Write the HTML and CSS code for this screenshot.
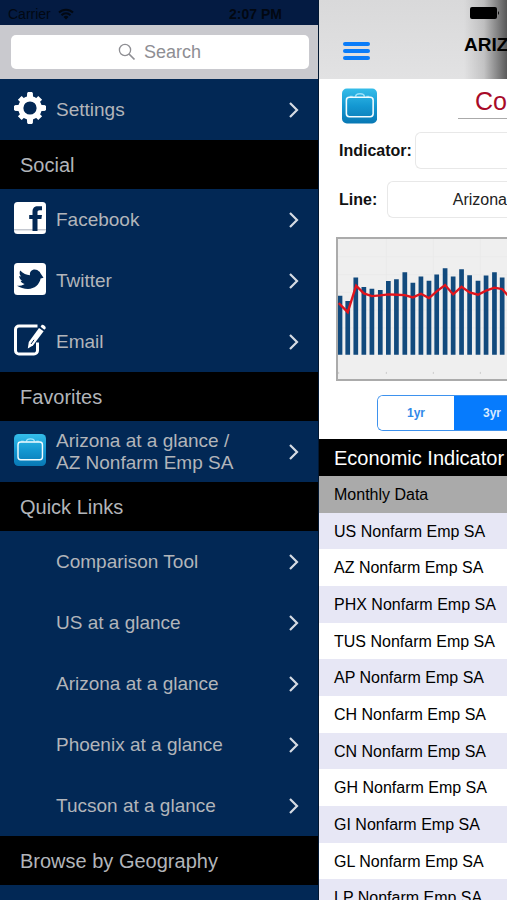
FILE: index.html
```html
<!DOCTYPE html>
<html lang="en">
<head>
<meta charset="utf-8">
<meta name="viewport" content="width=device-width, initial-scale=1">
<title>Arizona Economic Indicators</title>
<link rel="stylesheet" href="styles.css">
</head>
<body>
<svg class="defs" aria-hidden="true">
  <defs>
    <linearGradient id="tile" x1="0" y1="0" x2="0" y2="1">
      <stop offset="0" stop-color="#35bde9"/>
      <stop offset="0.5" stop-color="#1498d2"/>
      <stop offset="1" stop-color="#0878b4"/>
    </linearGradient>
    <symbol id="chevron" viewBox="0 0 12 18"><path d="M2 2l7 7-7 7" fill="none" stroke="#d5dbe3" stroke-width="2.200"/></symbol>
    <symbol id="case" viewBox="0 0 36 36">
      <rect width="36" height="36" rx="5" fill="url(#tile)"/>
      <path d="M14 8.500C14 4.500 23 4.500 23 8.500" fill="none" stroke="#9be2fa" stroke-width="1.500"/>
      <path d="M8 8h3M25 8h3" stroke="#9be2fa"/>
      <rect x="4.500" y="9" width="27.500" height="20" rx="3" fill="none" stroke="#f2fcff" stroke-width="1.600"/>
    </symbol>
  </defs>
</svg>
<div class="app">
  <aside class="menu">
    <div class="status">
      <span>Carrier</span>
      <svg class="wifi" viewBox="0 0 16 12"><path d="M1 4.500a10 10 0 0 1 14 0M3.500 7.200a6.400 6.400 0 0 1 9 0" fill="none" stroke="#020812" stroke-width="2"/><path d="M5.500 9a3.600 3.600 0 0 1 5 0L8 11.600z" fill="#020812"/></svg>
      <time>2:07 PM</time>
    </div>
    <div class="search">
      <label class="search-box">
        <svg viewBox="0 0 18 18"><circle cx="7" cy="7" r="5.600" fill="none" stroke="#8e8e93" stroke-width="1.300"/><path d="M11 11l5.500 5.500" stroke="#8e8e93" stroke-width="1.700"/></svg>
        <input type="text" placeholder="Search" aria-label="Search">
      </label>
    </div>
    <nav>
      <a class="item" href="#settings">
        <svg class="icon" viewBox="0 0 32 32">
          <path d="M16 1v30M1 16h30M5.800 5.800l20.400 20.400M26.200 5.800L5.800 26.200" stroke="#fff" stroke-width="5.400" stroke-linecap="butt"/>
          <circle cx="16" cy="16" r="11.800" fill="#fff"/>
          <path d="M13.700 0h4.600l.9 5h-6.400zM13.700 32h4.600l.9-5h-6.400zM0 13.700v4.600l5 .9v-6.400zM32 13.700v4.600l-5 .9v-6.400z" fill="#fff"/>
          <circle cx="16" cy="16" r="6.600" fill="#022855"/>
        </svg>
        <span>Settings</span><svg class="chev"><use href="#chevron"/></svg>
      </a>
      <h2>Social</h2>
      <a class="item" href="#facebook">
        <svg class="icon" viewBox="0 0 32 32"><rect width="32" height="32" rx="3.500" fill="#fff"/><path d="M0 27h32v1.500H0z" fill="#c4c8d0"/><path fill="#022855" d="M18.500 29V17h-3.300v-4h3.300V9.800c0-3.700 2-5.500 5.300-5.500H28v4h-2.400c-1.600 0-2.100.7-2.100 2V13H28l-.6 4h-3.900v12z"/></svg>
        <span>Facebook</span><svg class="chev"><use href="#chevron"/></svg>
      </a>
      <a class="item" href="#twitter">
        <svg class="icon" viewBox="0 0 32 32"><rect width="32" height="32" rx="3.500" fill="#fff"/><path fill="#022855" d="M6.200 7.500c3 3.300 6.200 4.500 9.800 4.700-.6-3.400 1.800-5.700 4.700-5.700 2 0 3.200.8 4 1.800 0 0 1.100.2 1.600 1.600l3.200 4.800-2.900.9C25.500 21.500 20.600 26 14 26c-4 0-8-1.200-11-3.200 3 .1 6-.6 7.700-1.900-2.100-.3-3.500-1.400-4.100-3.100h1.800c-2-1-3.100-2.500-3.200-4.800l2 .5C5.500 11.900 5.200 9.500 6.200 7.500z"/></svg>
        <span>Twitter</span><svg class="chev"><use href="#chevron"/></svg>
      </a>
      <a class="item" href="#email">
        <svg class="icon" viewBox="0 0 32 32"><path d="M23.500 2H5a3.500 3.500 0 0 0-3.500 3.500v21A3.500 3.500 0 0 0 5 30h15a3.500 3.500 0 0 0 3.500-3.500V18.500" fill="none" stroke="#fff" stroke-width="3"/><path d="M13.800 24.500l1-6.500L25 4l4.600 3.300L19 21.500z" fill="#fff"/><path d="M26.600 2.800l1-1.700c1-1.400 5 1.700 4 3.100l-1.200 1.600z" fill="#fff"/><path d="M17 20l3-4.200" stroke="#022855"/></svg>
        <span>Email</span><svg class="chev"><use href="#chevron"/></svg>
      </a>
      <h2>Favorites</h2>
      <a class="item" href="#favorite">
        <svg class="icon"><use href="#case"/></svg>
        <span>Arizona at a glance /<br>AZ Nonfarm Emp SA</span><svg class="chev"><use href="#chevron"/></svg>
      </a>
      <h2>Quick Links</h2>
      <a class="item plain" href="#compare"><span>Comparison Tool</span><svg class="chev"><use href="#chevron"/></svg></a>
      <a class="item plain" href="#us"><span>US at a glance</span><svg class="chev"><use href="#chevron"/></svg></a>
      <a class="item plain" href="#arizona"><span>Arizona at a glance</span><svg class="chev"><use href="#chevron"/></svg></a>
      <a class="item plain" href="#phoenix"><span>Phoenix at a glance</span><svg class="chev"><use href="#chevron"/></svg></a>
      <a class="item plain" href="#tucson"><span>Tucson at a glance</span><svg class="chev"><use href="#chevron"/></svg></a>
      <h2>Browse by Geography</h2>
    </nav>
  </aside>
  <main class="page">
    <header class="bar">
      <svg class="battery" viewBox="0 0 30 12"><rect width="27" height="12" rx="2"/><path d="M28 4q2 2 0 4z"/></svg>
      <button class="burger" type="button" aria-label="Menu"><i></i><i></i><i></i></button>
      <h1>ARIZ</h1>
    </header>
    <section class="panel">
      <div class="title"><svg class="case"><use href="#case"/></svg><strong>Co</strong></div>
      <div class="field indicator"><label for="ind">Indicator:</label><button id="ind" type="button"></button></div>
      <div class="field line"><label for="line">Line:</label><button id="line" type="button">Arizona</button></div>
      <svg class="chart" viewBox="39 42 507 417" preserveAspectRatio="xMinYMin slice">
        <path d="M39 95H546M39 148H546M39 201H546M39 254H546M39 307H546M183 42V387M323 42V387M463 42V387" stroke="#e9e9e9" stroke-width="2"/>
        <path d="M45 387V211M68 387V227M92 387V157M116 387V185M140 387V190M165 387V194M189 387V167M213 387V162M238 387V141M262 387V172M286 387V154M310 387V166M333 387V148M358 387V129M382 387V154M407 387V132M431 387V150M456 387V166M480 387V151M505 387V141M528 387V157" stroke="#124a7d" stroke-width="14"/>
        <path d="M41 438v6M183 438v6M323 438v6M463 438v6" stroke="#bbb" stroke-width="2"/>
        <polyline points="41,233 68,260 93,181 116,204 140,212 165,210 189,207 213,208 238,209 262,216 286,205 310,218 333,198 358,179 382,207 407,184 431,201 456,208 480,196 505,187 528,191 548,214" fill="none" stroke="#e0141c" stroke-width="7"/>
      </svg>
      <div class="range"><button type="button">1yr</button><button class="on" type="button">3yr</button></div>
    </section>
    <table class="data">
      <thead>
        <tr><th>Economic Indicator</th></tr>
        <tr class="sub"><th>Monthly Data</th></tr>
      </thead>
      <tbody>
        <tr><td>US Nonfarm Emp SA</td></tr>
        <tr><td>AZ Nonfarm Emp SA</td></tr>
        <tr><td>PHX Nonfarm Emp SA</td></tr>
        <tr><td>TUS Nonfarm Emp SA</td></tr>
        <tr><td>AP Nonfarm Emp SA</td></tr>
        <tr><td>CH Nonfarm Emp SA</td></tr>
        <tr><td>CN Nonfarm Emp SA</td></tr>
        <tr><td>GH Nonfarm Emp SA</td></tr>
        <tr><td>GI Nonfarm Emp SA</td></tr>
        <tr><td>GL Nonfarm Emp SA</td></tr>
        <tr><td>LP Nonfarm Emp SA</td></tr>
      </tbody>
    </table>
  </main>
</div>
</body>
</html>
```
FILE: styles.css
```css
* { box-sizing: border-box; }
body { margin: 0; font-family: "Liberation Sans", Arial, sans-serif; background: #022855; }
button, input { font: inherit; margin: 0; padding: 0; }
h1, h2 { margin: 0; font-weight: 400; }
.defs { position: absolute; width: 0; height: 0; }
.app { display: grid; grid-template-columns: minmax(0, 1fr) 188px; height: 100vh; overflow: hidden; }

.menu { background: #022855; color: #b2b5ba; border-right: 1px solid #021731; overflow: hidden; }
.status { display: flex; align-items: center; height: 25px; padding: 3px 36px 0 8px; background: #041b42; color: #020812; font-size: 14px; }
.status time { margin-left: auto; font-weight: 700; }
.wifi { width: 16px; height: 12px; margin-left: 7px; }
.search { height: 54px; padding: 10px 9px 10px 11px; background: #c9c9ce; }
.search-box { display: flex; align-items: center; justify-content: center; gap: 8px; height: 34px; background: #fff; border-radius: 5px; }
.search-box svg { width: 18px; height: 18px; }
.search-box input { width: 58px; border: 0; outline: 0; background: none; font-size: 18px; }
.search-box input::placeholder { color: #8e8e93; opacity: 1; }
.menu h2 { height: 49px; padding-left: 20px; background: #000; font-size: 20px; line-height: 50px; white-space: nowrap; }
.item { display: flex; align-items: center; height: 61px; padding: 0 18px 0 14px; color: inherit; text-decoration: none; font-size: 19px; line-height: 22px; }
.item span { flex: 1; white-space: nowrap; }
.plain { padding-left: 56px; }
.icon { width: 32px; height: 32px; margin: 0 10px 4px 0; }
.chev { width: 12px; height: 18px; }

.page { background: #fff; overflow: hidden; color: #111; }
.bar { position: relative; height: 79px; padding: 35px 0 0 24px; display: flex; align-items: flex-start; background: linear-gradient(90deg, transparent 145px, #0002 165px, #0009), linear-gradient(#d9d9da, #e2e2e3); }
.battery { position: absolute; top: 7px; left: 151px; width: 30px; height: 12px; }
.burger { display: flex; flex-direction: column; gap: 3px; width: 27px; margin-top: 7px; border: 0; background: none; }
.burger i { height: 4px; width: 27px; border-radius: 2px; background: #0a7cf8; }
.bar h1 { margin-left: 94px; font-size: 19px; line-height: 20px; font-weight: 700; color: #000; white-space: nowrap; }

.panel { height: 360px; overflow: hidden; }
.title { display: flex; align-items: flex-start; height: 53px; padding: 9px 0 0 23px; }
.case { width: 36px; height: 36px; }
.title strong { flex: 1; height: 31px; margin-left: 81px; padding-left: 17px; border-bottom: 1px solid #aaa; color: #a80a28; font-size: 25px; line-height: 27px; font-weight: 400; }
.field { display: flex; align-items: center; height: 37px; margin-bottom: 12px; padding-left: 20px; font-size: 16px; }
.field label { font-weight: 700; color: #111; white-space: nowrap; }
.field button { flex: 1; height: 37px; border: 1px solid #e8e8e8; border-right: 0; border-radius: 6px 0 0 6px; background: #fff; text-align: left; color: #222; }
.indicator label { width: 76px; }
.line label { width: 48px; }
.line button { padding-left: 65px; }
.chart { display: block; width: 171px; height: 144px; margin: 19px 0 0 17px; border: 2px solid #ababab; border-right: 0; background: #efefef; }
.range { display: flex; height: 36px; margin: 14px 0 0 58px; border: 1px solid #3e92ee; border-right: 0; border-radius: 6px 0 0 6px; overflow: hidden; font-size: 12px; font-weight: 700; }
.range button { flex: none; width: 76px; border: 0; background: #fff; color: #3189e9; }
.range .on { background: #067bfd; color: #d6eaff; }

.data { width: 100%; border-collapse: collapse; table-layout: fixed; white-space: nowrap; }
.data th, .data td { height: 37px; padding: 1px 0 0 15px; text-align: left; font-size: 16px; line-height: 20px; font-weight: 400; color: #000; overflow: hidden; }
.data th { background: #000; color: #fff; font-size: 20px; }
.data .sub th { background: #aaa; color: #000; font-size: 16px; }
.data tbody tr:nth-child(odd) { background: #e7e7f5; }
.data tbody tr:nth-child(3n+1) td { height: 36px; }
```
